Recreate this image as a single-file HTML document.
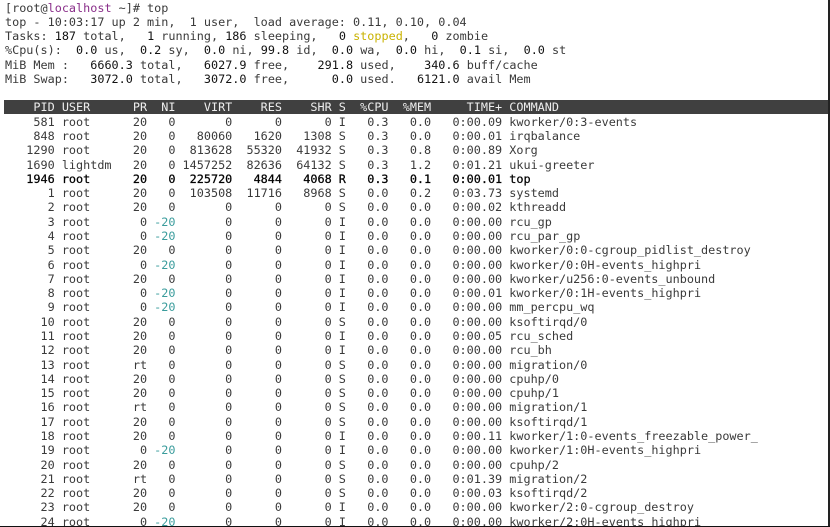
<!DOCTYPE html>
<html><head><meta charset="utf-8">
<style>
html,body{margin:0;padding:0;background:#fff;width:830px;height:527px;overflow:hidden;position:relative}
pre{margin:0;position:absolute;left:5px;top:0.5px;font-family:"DejaVu Sans Mono","Liberation Mono",monospace;font-size:11.8px;line-height:14.28px;color:#3a3a3a;white-space:pre}
b{font-weight:normal;color:#111}
.p{color:#8a2f8a}
.y{color:#c9b200}
.t{color:#3a9c9c}
.hd{position:absolute;left:4px;right:0;top:99.5px;height:14.3px;background:#404040}
.hd pre{position:absolute;left:1px;top:0;color:#eee}
.bold{color:#000;-webkit-text-stroke:0.25px #000}
.rb{position:absolute;right:0;top:0;width:2px;height:527px;background:#222}
.bb{position:absolute;left:0;bottom:0;width:830px;height:1px;background:#111}
</style></head><body>
<div class="hd"><pre>    PID USER      PR  NI    VIRT    RES    SHR S  %CPU  %MEM     TIME+ COMMAND</pre></div>
<pre>[root@<span class="p">localhost</span> ~]# top
top - 10:03:17 up 2 min,  1 user,  load average: 0.11, 0.10, 0.04
Tasks: <b>187</b> total,   <b>1</b> running, <b>186</b> sleeping,   <b>0</b> <span class="y">stopped</span>,   <b>0</b> zombie
%Cpu(s):  <b>0.0</b> us,  <b>0.2</b> sy,  <b>0.0</b> ni, <b>99.8</b> id,  <b>0.0</b> wa,  <b>0.0</b> hi,  <b>0.1</b> si,  <b>0.0</b> st
MiB Mem :   <b>6660.3</b> total,   <b>6027.9</b> free,    <b>291.8</b> used,    <b>340.6</b> buff/cache
MiB Swap:   <b>3072.0</b> total,   <b>3072.0</b> free,      <b>0.0</b> used.   <b>6121.0</b> avail Mem


    581 root      20   0       0      0      0 I   0.3   0.0   0:00.09 kworker/0:3-events
    848 root      20   0   80060   1620   1308 S   0.3   0.0   0:00.01 irqbalance
   1290 root      20   0  813628  55320  41932 S   0.3   0.8   0:00.89 Xorg
   1690 lightdm   20   0 1457252  82636  64132 S   0.3   1.2   0:01.21 ukui-greeter
<span class="bold">   1946 root      20   0  225720   4844   4068 R   0.3   0.1   0:00.01 top</span>
      1 root      20   0  103508  11716   8968 S   0.0   0.2   0:03.73 systemd
      2 root      20   0       0      0      0 S   0.0   0.0   0:00.02 kthreadd
      3 root       0 <span class="t">-20</span>       0      0      0 I   0.0   0.0   0:00.00 rcu_gp
      4 root       0 <span class="t">-20</span>       0      0      0 I   0.0   0.0   0:00.00 rcu_par_gp
      5 root      20   0       0      0      0 I   0.0   0.0   0:00.00 kworker/0:0-cgroup_pidlist_destroy
      6 root       0 <span class="t">-20</span>       0      0      0 I   0.0   0.0   0:00.00 kworker/0:0H-events_highpri
      7 root      20   0       0      0      0 I   0.0   0.0   0:00.00 kworker/u256:0-events_unbound
      8 root       0 <span class="t">-20</span>       0      0      0 I   0.0   0.0   0:00.01 kworker/0:1H-events_highpri
      9 root       0 <span class="t">-20</span>       0      0      0 I   0.0   0.0   0:00.00 mm_percpu_wq
     10 root      20   0       0      0      0 S   0.0   0.0   0:00.00 ksoftirqd/0
     11 root      20   0       0      0      0 I   0.0   0.0   0:00.05 rcu_sched
     12 root      20   0       0      0      0 I   0.0   0.0   0:00.00 rcu_bh
     13 root      rt   0       0      0      0 S   0.0   0.0   0:00.00 migration/0
     14 root      20   0       0      0      0 S   0.0   0.0   0:00.00 cpuhp/0
     15 root      20   0       0      0      0 S   0.0   0.0   0:00.00 cpuhp/1
     16 root      rt   0       0      0      0 S   0.0   0.0   0:00.00 migration/1
     17 root      20   0       0      0      0 S   0.0   0.0   0:00.00 ksoftirqd/1
     18 root      20   0       0      0      0 I   0.0   0.0   0:00.11 kworker/1:0-events_freezable_power_
     19 root       0 <span class="t">-20</span>       0      0      0 I   0.0   0.0   0:00.00 kworker/1:0H-events_highpri
     20 root      20   0       0      0      0 S   0.0   0.0   0:00.00 cpuhp/2
     21 root      rt   0       0      0      0 S   0.0   0.0   0:01.39 migration/2
     22 root      20   0       0      0      0 S   0.0   0.0   0:00.03 ksoftirqd/2
     23 root      20   0       0      0      0 I   0.0   0.0   0:00.00 kworker/2:0-cgroup_destroy
     24 root       0 <span class="t">-20</span>       0      0      0 I   0.0   0.0   0:00.00 kworker/2:0H-events_highpri</pre>
<div class="rb"></div>
<div class="bb"></div>
</body></html>
